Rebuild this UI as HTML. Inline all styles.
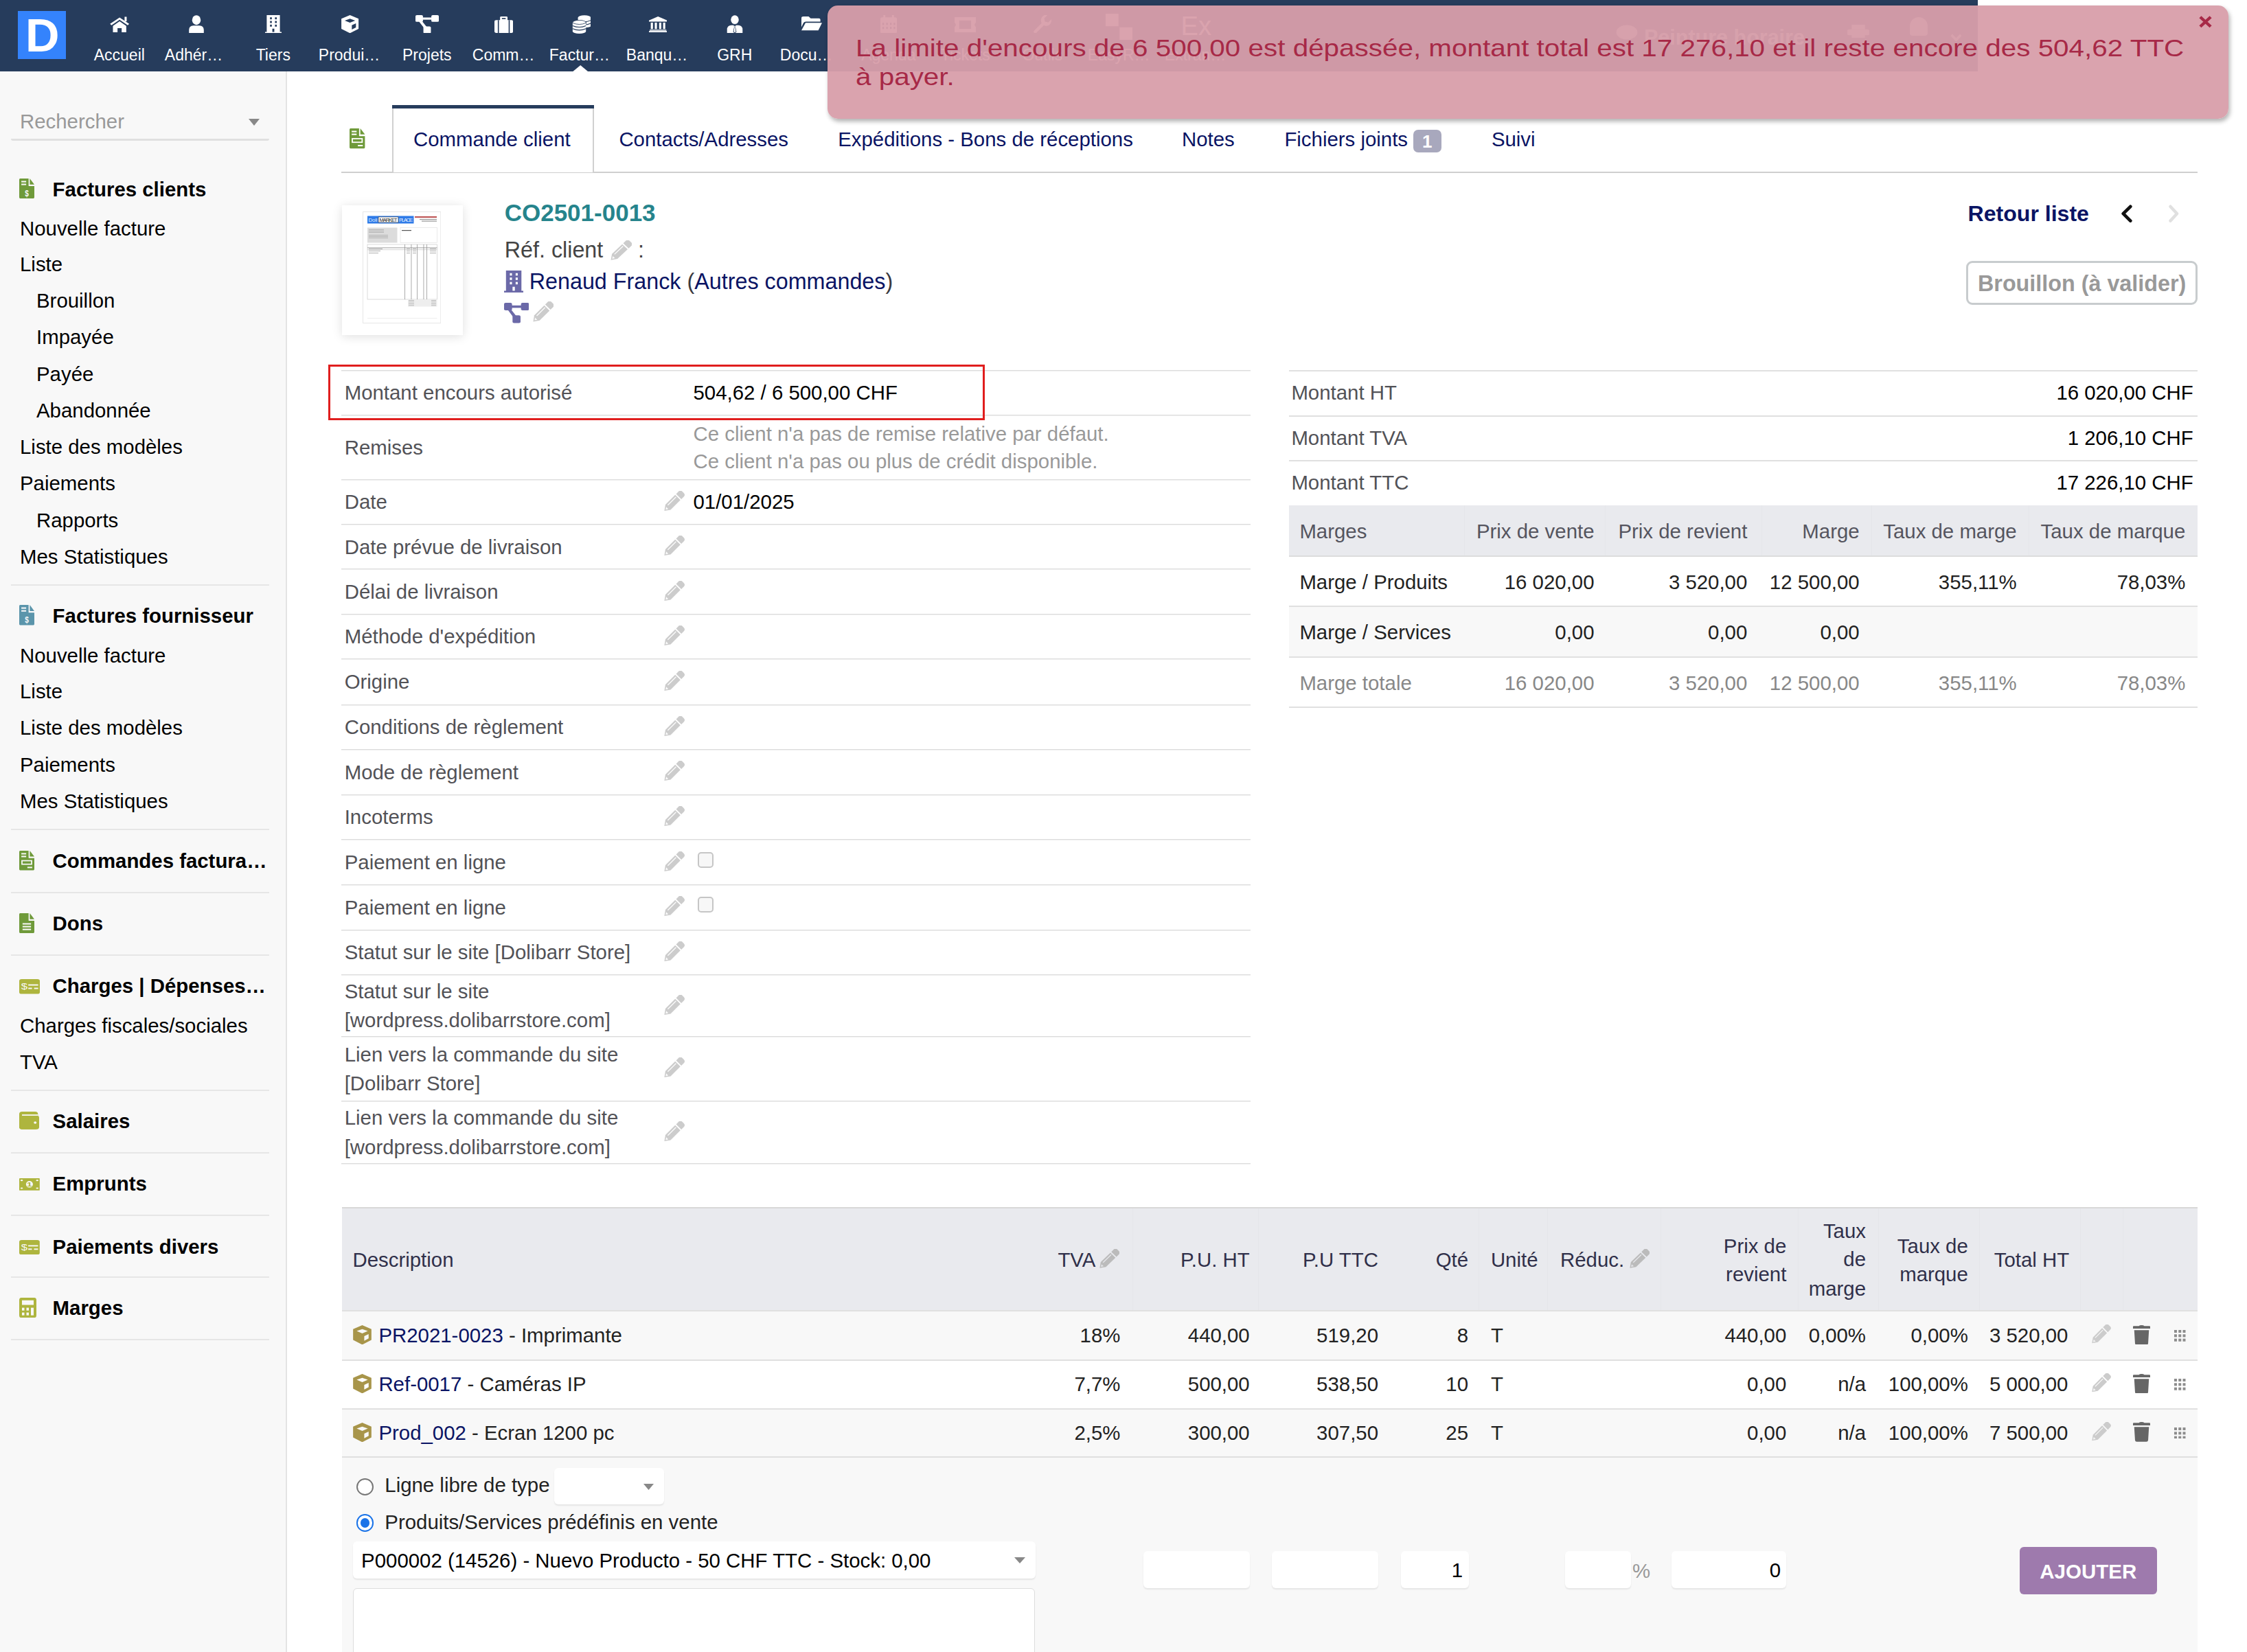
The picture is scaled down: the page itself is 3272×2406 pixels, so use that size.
<!DOCTYPE html><html><head><meta charset="utf-8"><style>html,body{margin:0;padding:0;}body{width:3272px;height:2406px;overflow:hidden;position:relative;background:#fff;font-family:"Liberation Sans",sans-serif;}.t{position:absolute;line-height:0;white-space:nowrap;}svg{display:block}</style></head><body>
<div style="position:absolute;left:0.00px;top:104.00px;width:416.00px;height:2302.00px;background:#f8f8f8;"></div>
<div style="position:absolute;left:416.00px;top:104.00px;width:1.50px;height:2302.00px;background:#e4e4e4;"></div>
<div class="t" style="left:29.00px;top:176.51px;font-size:29.4px;color:#999;font-weight:normal;">Rechercher</div>
<svg style="position:absolute;left:361.70px;top:172.70px;" width="16.00" height="10.00" viewBox="0 0 10 10" preserveAspectRatio="none"><path fill="#888" d="M0 0 L10 0 L5 10 Z"/></svg>
<div style="position:absolute;left:16.40px;top:202.00px;width:375.20px;height:2.50px;background:#e0e0e0;border-radius:0 0 4px 4px;"></div>
<svg style="position:absolute;left:28.00px;top:259.50px;" width="22.00" height="29.00" viewBox="0 0 100 100" preserveAspectRatio="none"><path fill="#6f9a3a" d="M0 6 Q0 0 6 0 L62 0 L62 38 L100 38 L100 94 Q100 100 94 100 L6 100 Q0 100 0 94 Z"/><path fill="#6f9a3a" d="M70 0 L100 30 L70 30 Z"/><rect fill="#f8f8f8" x="14" y="12" width="32" height="7"/><rect fill="#f8f8f8" x="14" y="26" width="32" height="7"/><text x="50" y="88" font-family="Liberation Sans" font-weight="bold" font-size="46" fill="#f8f8f8" text-anchor="middle">$</text></svg>
<div class="t" style="left:76.60px;top:275.81px;font-size:29.4px;color:#000;font-weight:bold;">Factures clients</div>
<div class="t" style="left:29.00px;top:332.61px;font-size:29.4px;color:#000;font-weight:normal;">Nouvelle facture</div>
<div class="t" style="left:29.00px;top:385.41px;font-size:29.4px;color:#000;font-weight:normal;">Liste</div>
<div class="t" style="left:53.00px;top:438.31px;font-size:29.4px;color:#000;font-weight:normal;">Brouillon</div>
<div class="t" style="left:53.00px;top:491.31px;font-size:29.4px;color:#000;font-weight:normal;">Impayée</div>
<div class="t" style="left:53.00px;top:544.91px;font-size:29.4px;color:#000;font-weight:normal;">Payée</div>
<div class="t" style="left:53.00px;top:597.81px;font-size:29.4px;color:#000;font-weight:normal;">Abandonnée</div>
<div class="t" style="left:29.00px;top:650.81px;font-size:29.4px;color:#000;font-weight:normal;">Liste des modèles</div>
<div class="t" style="left:29.00px;top:703.81px;font-size:29.4px;color:#000;font-weight:normal;">Paiements</div>
<div class="t" style="left:53.00px;top:757.61px;font-size:29.4px;color:#000;font-weight:normal;">Rapports</div>
<div class="t" style="left:29.00px;top:810.61px;font-size:29.4px;color:#000;font-weight:normal;">Mes Statistiques</div>
<div style="position:absolute;left:16.00px;top:850.60px;width:376.00px;height:2.00px;background:#e6e6e6;"></div>
<svg style="position:absolute;left:28.00px;top:881.40px;" width="22.00" height="29.60" viewBox="0 0 100 100" preserveAspectRatio="none"><path fill="#5b95ab" d="M0 6 Q0 0 6 0 L62 0 L62 38 L100 38 L100 94 Q100 100 94 100 L6 100 Q0 100 0 94 Z"/><path fill="#5b95ab" d="M70 0 L100 30 L70 30 Z"/><rect fill="#f8f8f8" x="14" y="12" width="32" height="7"/><rect fill="#f8f8f8" x="14" y="26" width="32" height="7"/><text x="50" y="88" font-family="Liberation Sans" font-weight="bold" font-size="46" fill="#f8f8f8" text-anchor="middle">$</text></svg>
<div class="t" style="left:76.60px;top:896.91px;font-size:29.4px;color:#000;font-weight:bold;">Factures fournisseur</div>
<div class="t" style="left:29.00px;top:954.61px;font-size:29.4px;color:#000;font-weight:normal;">Nouvelle facture</div>
<div class="t" style="left:29.00px;top:1007.31px;font-size:29.4px;color:#000;font-weight:normal;">Liste</div>
<div class="t" style="left:29.00px;top:1059.51px;font-size:29.4px;color:#000;font-weight:normal;">Liste des modèles</div>
<div class="t" style="left:29.00px;top:1113.51px;font-size:29.4px;color:#000;font-weight:normal;">Paiements</div>
<div class="t" style="left:29.00px;top:1167.11px;font-size:29.4px;color:#000;font-weight:normal;">Mes Statistiques</div>
<div style="position:absolute;left:16.00px;top:1207.40px;width:376.00px;height:2.00px;background:#e6e6e6;"></div>
<svg style="position:absolute;left:28.00px;top:1239.00px;" width="22.00" height="28.50" viewBox="0 0 100 100" preserveAspectRatio="none"><path fill="#6f9a3a" d="M0 6 Q0 0 6 0 L62 0 L62 38 L100 38 L100 94 Q100 100 94 100 L6 100 Q0 100 0 94 Z"/><path fill="#6f9a3a" d="M70 0 L100 30 L70 30 Z"/><rect fill="#f8f8f8" x="14" y="12" width="32" height="7"/><rect fill="#f8f8f8" x="14" y="26" width="32" height="7"/><rect fill="#f8f8f8" x="14" y="48" width="72" height="24"/><rect fill="#6f9a3a" x="22" y="54" width="56" height="12"/><rect fill="#f8f8f8" x="54" y="82" width="32" height="7"/></svg>
<div class="t" style="left:76.60px;top:1254.21px;font-size:29.4px;color:#000;font-weight:bold;">Commandes factura…</div>
<div style="position:absolute;left:16.00px;top:1298.60px;width:376.00px;height:2.00px;background:#e6e6e6;"></div>
<svg style="position:absolute;left:28.00px;top:1330.00px;" width="22.00" height="29.00" viewBox="0 0 100 100" preserveAspectRatio="none"><path fill="#6f9a3a" d="M0 6 Q0 0 6 0 L62 0 L62 38 L100 38 L100 94 Q100 100 94 100 L6 100 Q0 100 0 94 Z"/><path fill="#6f9a3a" d="M70 0 L100 30 L70 30 Z"/><rect fill="#f8f8f8" x="22" y="50" width="56" height="7"/><rect fill="#f8f8f8" x="22" y="64" width="56" height="7"/><rect fill="#f8f8f8" x="22" y="78" width="56" height="7"/></svg>
<div class="t" style="left:76.60px;top:1345.41px;font-size:29.4px;color:#000;font-weight:bold;">Dons</div>
<div style="position:absolute;left:16.00px;top:1390.20px;width:376.00px;height:2.00px;background:#e6e6e6;"></div>
<svg style="position:absolute;left:28.00px;top:1426.00px;" width="30.00" height="21.60" viewBox="0 0 100 100" preserveAspectRatio="none"><rect fill="#aeb53e" x="0" y="0" width="100" height="100" rx="12"/><text x="25" y="70" font-family="Liberation Sans" font-size="56" fill="#f8f8f8" text-anchor="middle">$</text><rect fill="#f8f8f8" x="44" y="35" width="48" height="9"/><rect fill="#f8f8f8" x="44" y="58" width="18" height="9"/><rect fill="#f8f8f8" x="72" y="58" width="20" height="9"/></svg>
<div class="t" style="left:76.60px;top:1436.01px;font-size:29.4px;color:#000;font-weight:bold;">Charges | Dépenses…</div>
<div class="t" style="left:29.00px;top:1494.11px;font-size:29.4px;color:#000;font-weight:normal;">Charges fiscales/sociales</div>
<div class="t" style="left:29.00px;top:1547.01px;font-size:29.4px;color:#000;font-weight:normal;">TVA</div>
<div style="position:absolute;left:16.00px;top:1587.00px;width:376.00px;height:2.00px;background:#e6e6e6;"></div>
<svg style="position:absolute;left:28.00px;top:1619.00px;" width="29.00" height="25.70" viewBox="0 0 100 100" preserveAspectRatio="none"><rect fill="#aeb53e" x="0" y="0" width="94" height="100" rx="14"/><rect fill="#aeb53e" x="0" y="22" width="100" height="78" rx="12"/><rect fill="#f8f8f8" x="14" y="16" width="80" height="7"/><circle fill="#f8f8f8" cx="80" cy="62" r="7"/></svg>
<div class="t" style="left:76.60px;top:1632.91px;font-size:29.4px;color:#000;font-weight:bold;">Salaires</div>
<div style="position:absolute;left:16.00px;top:1678.30px;width:376.00px;height:2.00px;background:#e6e6e6;"></div>
<svg style="position:absolute;left:28.00px;top:1716.00px;" width="29.80" height="17.70" viewBox="0 0 100 100" preserveAspectRatio="none"><rect fill="#aeb53e" x="0" y="0" width="100" height="100" rx="3"/><ellipse fill="#f8f8f8" cx="50" cy="50" rx="17" ry="27"/><text x="50" y="66" font-family="Liberation Sans" font-weight="bold" font-size="46" fill="#aeb53e" text-anchor="middle">1</text><circle fill="#f8f8f8" cx="12" cy="18" r="6"/><circle fill="#f8f8f8" cx="88" cy="18" r="6"/><circle fill="#f8f8f8" cx="12" cy="82" r="6"/><circle fill="#f8f8f8" cx="88" cy="82" r="6"/></svg>
<div class="t" style="left:76.60px;top:1724.11px;font-size:29.4px;color:#000;font-weight:bold;">Emprunts</div>
<div style="position:absolute;left:16.00px;top:1769.00px;width:376.00px;height:2.00px;background:#e6e6e6;"></div>
<svg style="position:absolute;left:28.00px;top:1806.00px;" width="29.80" height="21.30" viewBox="0 0 100 100" preserveAspectRatio="none"><rect fill="#aeb53e" x="0" y="0" width="100" height="100" rx="12"/><text x="25" y="70" font-family="Liberation Sans" font-size="56" fill="#f8f8f8" text-anchor="middle">$</text><rect fill="#f8f8f8" x="44" y="35" width="48" height="9"/><rect fill="#f8f8f8" x="44" y="58" width="18" height="9"/><rect fill="#f8f8f8" x="72" y="58" width="20" height="9"/></svg>
<div class="t" style="left:76.60px;top:1816.11px;font-size:29.4px;color:#000;font-weight:bold;">Paiements divers</div>
<div style="position:absolute;left:16.00px;top:1858.60px;width:376.00px;height:2.00px;background:#e6e6e6;"></div>
<svg style="position:absolute;left:28.00px;top:1889.60px;" width="25.00" height="29.20" viewBox="0 0 100 100" preserveAspectRatio="none"><rect fill="#aeb53e" x="0" y="0" width="100" height="100" rx="12"/><rect fill="#f8f8f8" x="16" y="13" width="68" height="23"/><rect fill="#f8f8f8" x="16" y="50" width="14" height="14"/><rect fill="#f8f8f8" x="42" y="50" width="14" height="14"/><rect fill="#f8f8f8" x="16" y="74" width="14" height="14"/><rect fill="#f8f8f8" x="42" y="74" width="14" height="14"/><rect fill="#f8f8f8" x="68" y="50" width="16" height="38"/></svg>
<div class="t" style="left:76.60px;top:1904.51px;font-size:29.4px;color:#000;font-weight:bold;">Marges</div>
<div style="position:absolute;left:16.00px;top:1949.80px;width:376.00px;height:2.00px;background:#e6e6e6;"></div>
<div style="position:absolute;left:0.00px;top:0.00px;width:2880.00px;height:104.00px;background:rgb(38,60,92);"></div>
<div style="position:absolute;left:26.00px;top:16.00px;width:70.00px;height:70.00px;background:#3483fc;"></div>
<div class="t" style="left:-438.20px;width:1000px;text-align:center;top:52.25px;font-size:68.5px;color:#fff;font-weight:bold;">D</div>
<svg style="position:absolute;left:833.60px;top:94.70px;" width="22.50" height="9.30" viewBox="0 0 10 10" preserveAspectRatio="none"><path fill="#fff" d="M0 10 L5 0 L10 10 Z"/></svg>
<div class="t" style="left:127.80px;width:92px;text-align:center;top:79.83px;font-size:23px;color:#fff;">Accueil</div>
<svg style="position:absolute;left:158.60px;top:23.50px;" width="30.30" height="23.50" viewBox="0 0 100 100" preserveAspectRatio="none"><path fill="#fff" d="M50 6 L96 46 L89 54 L50 20 L11 54 L4 46 Z"/><rect fill="#fff" x="74" y="2" width="10" height="28"/><path fill="#fff" d="M50 30 L82 58 L82 100 L60 100 L60 72 L40 72 L40 100 L18 100 L18 58 Z"/></svg>
<div class="t" style="left:239.80px;width:92px;text-align:left;top:79.83px;font-size:23px;color:#fff;">Adhér…</div>
<svg style="position:absolute;left:273.80px;top:21.80px;" width="24.00" height="26.70" viewBox="0 0 100 100" preserveAspectRatio="none"><circle fill="#fff" cx="50" cy="27" r="26"/><path fill="#fff" d="M5 100 L5 82 Q5 57 32 57 L68 57 Q95 57 95 82 L95 100 Z"/></svg>
<div class="t" style="left:351.80px;width:92px;text-align:center;top:79.83px;font-size:23px;color:#fff;">Tiers</div>
<svg style="position:absolute;left:385.80px;top:21.70px;" width="24.00" height="26.70" viewBox="0 0 100 100" preserveAspectRatio="none"><path fill="#fff" d="M10 0 H90 V92 H100 V100 H0 V92 H10 Z"/><rect fill="rgb(38,60,92)" x="30" y="12" width="11" height="11"/><rect fill="rgb(38,60,92)" x="60" y="12" width="11" height="11"/><rect fill="rgb(38,60,92)" x="30" y="32" width="11" height="11"/><rect fill="rgb(38,60,92)" x="60" y="32" width="11" height="11"/><rect fill="rgb(38,60,92)" x="30" y="52" width="11" height="11"/><rect fill="rgb(38,60,92)" x="60" y="52" width="11" height="11"/><rect fill="rgb(38,60,92)" x="44" y="74" width="12" height="18"/></svg>
<div class="t" style="left:463.80px;width:92px;text-align:left;top:79.83px;font-size:23px;color:#fff;">Produi…</div>
<svg style="position:absolute;left:496.20px;top:21.70px;" width="27.20" height="26.30" viewBox="0 0 100 100" preserveAspectRatio="none"><path fill="#fff" d="M50 0 L96 20 L96 76 L50 100 L4 76 L4 20 Z"/><path fill="rgb(38,60,92)" d="M50 20 L78 30 L50 42 L22 30 Z"/><path fill="rgb(38,60,92)" d="M60 56 L82 46 L82 68 L60 80 Z"/></svg>
<div class="t" style="left:575.80px;width:92px;text-align:center;top:79.83px;font-size:23px;color:#fff;">Projets</div>
<svg style="position:absolute;left:604.80px;top:21.70px;" width="34.00" height="26.70" viewBox="0 0 100 100" preserveAspectRatio="none"><rect fill="#fff" x="0" y="0" width="32" height="37" rx="6"/><rect fill="#fff" x="68" y="0" width="32" height="37" rx="6"/><rect fill="#fff" x="34" y="62" width="32" height="38" rx="6"/><rect fill="#fff" x="25" y="13" width="50" height="12"/><path fill="#fff" d="M12 30 L26 30 L52 70 L40 76 Z"/></svg>
<div class="t" style="left:687.80px;width:92px;text-align:left;top:79.83px;font-size:23px;color:#fff;">Comm…</div>
<svg style="position:absolute;left:720.20px;top:23.50px;" width="27.20" height="24.00" viewBox="0 0 100 100" preserveAspectRatio="none"><rect fill="#fff" x="0" y="22" width="100" height="78" rx="10"/><rect fill="#fff" x="30" y="0" width="40" height="30" rx="6"/><rect fill="rgb(38,60,92)" x="40" y="9" width="20" height="7"/><rect fill="rgb(38,60,92)" x="18" y="22" width="6" height="78"/><rect fill="rgb(38,60,92)" x="76" y="22" width="6" height="78"/></svg>
<div class="t" style="left:799.80px;width:92px;text-align:left;top:79.83px;font-size:23px;color:#fff;">Factur…</div>
<svg style="position:absolute;left:832.80px;top:21.70px;" width="27.70" height="27.00" viewBox="0 0 100 100" preserveAspectRatio="none"><ellipse fill="#fff" cx="65" cy="14" rx="34" ry="13"/><rect fill="#fff" x="31" y="14" width="68" height="44"/><ellipse fill="#fff" cx="65" cy="58" rx="34" ry="10"/><path stroke="rgb(38,60,92)" stroke-width="4" fill="none" d="M31 28 Q65 44 99 28 M31 44 Q65 60 99 44"/><ellipse fill="rgb(38,60,92)" cx="38" cy="42" rx="38" ry="16"/><ellipse fill="#fff" cx="38" cy="42" rx="35" ry="13"/><rect fill="#fff" x="3" y="42" width="70" height="46"/><ellipse fill="#fff" cx="38" cy="88" rx="35" ry="12"/><path stroke="rgb(38,60,92)" stroke-width="4" fill="none" d="M3 57 Q38 73 73 57 M3 73 Q38 89 73 73"/><path stroke="rgb(38,60,92)" stroke-width="3" fill="none" d="M3 42 Q38 58 73 42"/></svg>
<div class="t" style="left:911.80px;width:92px;text-align:left;top:79.83px;font-size:23px;color:#fff;">Banqu…</div>
<svg style="position:absolute;left:944.80px;top:23.70px;" width="26.40" height="23.50" viewBox="0 0 100 100" preserveAspectRatio="none"><path fill="#fff" d="M50 0 L100 24 L100 32 L0 32 L0 24 Z"/><rect fill="#fff" x="10" y="38" width="12" height="40"/><rect fill="#fff" x="32" y="38" width="12" height="40"/><rect fill="#fff" x="56" y="38" width="12" height="40"/><rect fill="#fff" x="78" y="38" width="12" height="40"/><rect fill="#fff" x="4" y="82" width="92" height="6"/><rect fill="#fff" x="0" y="90" width="100" height="10"/></svg>
<div class="t" style="left:1023.80px;width:92px;text-align:center;top:79.83px;font-size:23px;color:#fff;">GRH</div>
<svg style="position:absolute;left:1057.80px;top:21.70px;" width="24.00" height="26.70" viewBox="0 0 100 100" preserveAspectRatio="none"><circle fill="#fff" cx="50" cy="25" r="24"/><path fill="#fff" d="M3 100 L3 80 Q3 55 30 55 L70 55 Q97 55 97 80 L97 100 Z"/><path fill="rgb(38,60,92)" d="M43 56 L57 56 L54 64 L60 92 L50 100 L40 92 L46 64 Z"/><path fill="#fff" d="M46 60 L54 60 L52 66 L56 90 L50 96 L44 90 L48 66 Z"/></svg>
<div class="t" style="left:1135.80px;width:92px;text-align:left;top:79.83px;font-size:23px;color:#fff;">Docu…</div>
<svg style="position:absolute;left:1166.80px;top:24.00px;" width="30.00" height="22.00" viewBox="0 0 100 100" preserveAspectRatio="none"><path fill="#fff" d="M0 10 Q0 0 10 0 L35 0 L45 12 L85 12 Q92 12 92 20 L92 34 L22 34 Q14 34 10 42 L0 70 Z"/><path fill="#fff" d="M20 42 L100 42 L82 92 L0 92 Z"/></svg>
<div class="t" style="left:1247.80px;width:92px;text-align:center;top:79.83px;font-size:23px;color:#fff;">Agenda</div>
<svg style="position:absolute;left:1281.80px;top:21.70px;" width="24.00" height="26.70" viewBox="0 0 100 100" preserveAspectRatio="none"><rect fill="#fff" x="0" y="12" width="100" height="88" rx="10"/><rect fill="#fff" x="18" y="0" width="12" height="22"/><rect fill="#fff" x="70" y="0" width="12" height="22"/><rect fill="rgb(38,60,92)" x="12" y="42" width="10" height="12"/><rect fill="rgb(38,60,92)" x="35" y="42" width="10" height="12"/><rect fill="rgb(38,60,92)" x="58" y="42" width="10" height="12"/><rect fill="rgb(38,60,92)" x="80" y="42" width="10" height="12"/><rect fill="rgb(38,60,92)" x="12" y="64" width="10" height="12"/><rect fill="rgb(38,60,92)" x="35" y="64" width="10" height="12"/><rect fill="rgb(38,60,92)" x="58" y="64" width="10" height="12"/><rect fill="rgb(38,60,92)" x="80" y="64" width="10" height="12"/></svg>
<div class="t" style="left:1359.80px;width:92px;text-align:center;top:79.83px;font-size:23px;color:#fff;">Tickets</div>
<svg style="position:absolute;left:1390.30px;top:25.00px;" width="31.00" height="22.00" viewBox="0 0 100 100" preserveAspectRatio="none"><path fill="#fff" d="M0 0 H100 V35 Q88 50 100 65 V100 H0 V65 Q12 50 0 35 Z"/><rect fill="rgb(38,60,92)" x="22" y="22" width="56" height="56"/></svg>
<div class="t" style="left:1471.80px;width:92px;text-align:center;top:79.83px;font-size:23px;color:#fff;">Outils</div>
<svg style="position:absolute;left:1504.80px;top:21.70px;" width="26.70" height="26.70" viewBox="0 0 100 100" preserveAspectRatio="none"><path fill="#fff" d="M98 22 L80 40 L62 36 L58 18 L76 0 Q50 -4 42 20 Q38 32 44 44 L4 84 Q-4 94 6 98 Q12 102 18 94 L56 56 Q70 62 82 56 Q100 46 98 22 Z"/></svg>
<div class="t" style="left:1583.80px;width:92px;text-align:left;top:79.83px;font-size:23px;color:#fff;">EasyR…</div>
<svg style="position:absolute;left:1610.20px;top:20.00px;" width="39.00" height="38.00" viewBox="0 0 100 100" preserveAspectRatio="none"><rect fill="#fff" x="0" y="0" width="48" height="48"/><rect fill="#fff" x="52" y="52" width="48" height="48"/></svg>
<div class="t" style="left:1695.80px;width:92px;text-align:left;top:79.83px;font-size:23px;color:#fff;">Extran…</div>
<div class="t" style="left:1241.80px;width:1000px;text-align:center;top:37.83px;font-size:38px;color:#fff;font-weight:normal;">Ex</div>
<div style="position:absolute;left:0;top:0;opacity:0.75">
<svg style="position:absolute;left:2353.00px;top:36.00px;" width="32.00" height="22.00" viewBox="0 0 100 100" preserveAspectRatio="none"><circle fill="#fff" cx="50" cy="50" r="48"/></svg>
<div class="t" style="left:2394.00px;top:54.43px;font-size:30.5px;color:#fff;font-weight:bold;">Peinture horaire</div>
<svg style="position:absolute;left:2690.00px;top:36.00px;" width="32.00" height="19.00" viewBox="0 0 100 100" preserveAspectRatio="none"><rect fill="#fff" x="20" y="0" width="60" height="35"/><rect fill="#fff" x="0" y="35" width="100" height="45" rx="8"/><rect fill="#fff" x="20" y="65" width="60" height="35"/></svg>
<div style="position:absolute;left:2781.00px;top:25.00px;width:26.00px;height:27.00px;background:#fff;border-radius:13px 13px 4px 4px;"></div>
<svg style="position:absolute;left:2840.00px;top:49.00px;" width="17.00" height="11.00" viewBox="0 0 20 12" preserveAspectRatio="none"><path fill="none" stroke="#fff" stroke-width="4" d="M2 2 L10 10 L18 2"/></svg>
</div>
<div style="position:absolute;left:497.00px;top:249.50px;width:2703.00px;height:2.00px;background:#cfcfcf;"></div>
<div style="position:absolute;left:571.40px;top:153.30px;width:293.80px;height:98.20px;background:#fff;border-left:2px solid #d0d0d0;border-right:2px solid #d0d0d0;box-sizing:border-box;"></div>
<div style="position:absolute;left:571.40px;top:153.30px;width:293.80px;height:5.20px;background:rgb(38,60,92);"></div>
<svg style="position:absolute;left:509.20px;top:187.40px;" width="22.40" height="29.30" viewBox="0 0 100 100" preserveAspectRatio="none"><path fill="#6f9a3a" d="M0 6 Q0 0 6 0 L62 0 L62 38 L100 38 L100 94 Q100 100 94 100 L6 100 Q0 100 0 94 Z"/><path fill="#6f9a3a" d="M70 0 L100 30 L70 30 Z"/><rect fill="#fff" x="14" y="12" width="32" height="7"/><rect fill="#fff" x="14" y="26" width="32" height="7"/><rect fill="#fff" x="14" y="48" width="72" height="24"/><rect fill="#6f9a3a" x="22" y="54" width="56" height="12"/><rect fill="#fff" x="54" y="82" width="32" height="7"/></svg>
<div class="t" style="left:602.00px;top:203.01px;font-size:29.4px;color:rgb(10,20,100);font-weight:normal;">Commande client</div>
<div class="t" style="left:901.40px;top:203.01px;font-size:29.4px;color:rgb(10,20,100);font-weight:normal;">Contacts/Adresses</div>
<div class="t" style="left:1220.20px;top:203.01px;font-size:29.4px;color:rgb(10,20,100);font-weight:normal;">Expéditions - Bons de réceptions</div>
<div class="t" style="left:1721.00px;top:203.01px;font-size:29.4px;color:rgb(10,20,100);font-weight:normal;">Notes</div>
<div class="t" style="left:1870.40px;top:203.01px;font-size:29.4px;color:rgb(10,20,100);font-weight:normal;">Fichiers joints</div>
<div style="position:absolute;left:2057.70px;top:189.00px;width:41.20px;height:33.00px;background:#a8a8bd;border-radius:7px;"></div>
<div class="t" style="left:1578.30px;width:1000px;text-align:center;top:206.49px;font-size:26px;color:#fff;font-weight:bold;">1</div>
<div class="t" style="left:2171.90px;top:203.01px;font-size:29.4px;color:rgb(10,20,100);font-weight:normal;">Suivi</div>
<div style="position:absolute;left:498.00px;top:299.00px;width:176.00px;height:189.00px;background:#fff;box-shadow:0 2px 14px rgba(0,0,0,0.13);"></div>
<svg style="position:absolute;left:528.00px;top:307.60px;" width="114.30" height="163.00" viewBox="0 0 114.3 163" preserveAspectRatio="none"><rect x="0.5" y="0.5" width="113.3" height="162" fill="#fff" stroke="#e6e6e6" stroke-width="1"/><rect x="7" y="6.5" width="67.5" height="11" fill="#2f7be8"/><rect x="23" y="8" width="29" height="8" fill="#fff" stroke="#333" stroke-width="0.6"/><text x="15" y="15.3" font-family="Liberation Sans" font-size="8" fill="#d8e6ff" text-anchor="middle" textLength="13">Doli</text><text x="37.5" y="15" font-family="Liberation Sans" font-size="7.5" fill="#222" text-anchor="middle" textLength="26">MARKET</text><text x="63" y="15.3" font-family="Liberation Sans" font-size="8" fill="#e6f0ff" text-anchor="middle" textLength="20">PLACE</text><rect x="76" y="7" width="32" height="2.2" fill="#b03030" opacity="0.8"/><rect x="83" y="11" width="25" height="1.2" fill="#999"/><rect x="86" y="13.5" width="22" height="1.2" fill="#999"/><rect x="7" y="23.5" width="43.5" height="22" fill="#dcdcdc"/><rect x="9" y="26" width="22" height="0.8" fill="#aaa"/><rect x="9" y="28" width="22" height="0.8" fill="#aaa"/><rect x="9" y="30" width="22" height="0.8" fill="#aaa"/><rect x="9" y="34" width="28" height="0.8" fill="#aaa"/><rect x="9" y="36" width="28" height="0.8" fill="#aaa"/><rect x="9" y="38" width="28" height="0.8" fill="#aaa"/><rect x="55" y="23.5" width="53.5" height="22" fill="none" stroke="#ddd" stroke-width="0.6"/><rect x="57" y="27" width="14" height="1.2" fill="#555"/><rect x="7" y="48" width="101.5" height="80" fill="none" stroke="#ccc" stroke-width="0.7"/><rect x="7" y="52.5" width="101.5" height="0.8" fill="#888"/><rect x="7" y="55.5" width="101.5" height="0.6" fill="#bbb"/><rect x="61.3" y="48" width="0.7" height="80" fill="#888"/><rect x="70.6" y="48" width="0.7" height="80" fill="#888"/><rect x="79.3" y="48" width="0.7" height="80" fill="#888"/><rect x="88.6" y="48" width="0.7" height="80" fill="#888"/><rect x="93.2" y="48" width="0.7" height="80" fill="#888"/><rect x="9" y="54" width="20" height="0.8" fill="#999"/><rect x="64" y="54" width="5" height="0.8" fill="#999"/><rect x="73" y="54" width="5" height="0.8" fill="#999"/><rect x="98" y="54" width="9" height="0.8" fill="#999"/><rect x="9" y="57" width="17" height="0.8" fill="#999"/><rect x="64" y="57" width="5" height="0.8" fill="#999"/><rect x="73" y="57" width="5" height="0.8" fill="#999"/><rect x="98" y="57" width="9" height="0.8" fill="#999"/><rect x="9" y="60" width="14" height="0.8" fill="#999"/><rect x="64" y="60" width="5" height="0.8" fill="#999"/><rect x="73" y="60" width="5" height="0.8" fill="#999"/><rect x="98" y="60" width="9" height="0.8" fill="#999"/><rect x="66" y="128" width="42.5" height="10.5" fill="#eee"/><rect x="67" y="129" width="8" height="0.8" fill="#aaa"/><rect x="100" y="129" width="7" height="0.8" fill="#aaa"/><rect x="67" y="131.5" width="8" height="0.8" fill="#aaa"/><rect x="100" y="131.5" width="7" height="0.8" fill="#aaa"/><rect x="67" y="134" width="8" height="0.8" fill="#aaa"/><rect x="100" y="134" width="7" height="0.8" fill="#aaa"/><rect x="67" y="136.5" width="8" height="0.8" fill="#aaa"/><rect x="100" y="136.5" width="7" height="0.8" fill="#aaa"/><rect x="7" y="155" width="101.5" height="0.5" fill="#ddd"/></svg>
<div class="t" style="left:734.70px;top:310.37px;font-size:35px;color:rgb(38,132,140);font-weight:bold;">CO2501-0013</div>
<div class="t" style="left:734.70px;top:364.30px;font-size:32.3px;color:#444;font-weight:normal;">Réf. client</div>
<svg style="position:absolute;left:887.00px;top:350.00px;" width="33.00" height="31.00" viewBox="0 0 100 100" preserveAspectRatio="none"><g transform="rotate(-45 50 50)"><path fill="#cccccc" d="M-10 50 L14 33 L78 33 L78 67 L14 67 Z"/><path fill="#cccccc" d="M84 33 L100 33 Q112 33 112 45 L112 55 Q112 67 100 67 L84 67 Z"/><path fill="#fff" d="M-2 50 L9 43 L9 57 Z" opacity="0.9"/><rect fill="#fff" x="20" y="40" width="54" height="4.5" opacity="0.9"/></g></svg>
<div class="t" style="left:929.00px;top:364.30px;font-size:32.3px;color:#444;font-weight:normal;">:</div>
<svg style="position:absolute;left:733.70px;top:394.00px;" width="28.10" height="32.00" viewBox="0 0 100 100" preserveAspectRatio="none"><path fill="#6b69a8" d="M10 0 H90 V92 H100 V100 H0 V92 H10 Z"/><rect fill="#fff" x="30" y="12" width="11" height="11"/><rect fill="#fff" x="60" y="12" width="11" height="11"/><rect fill="#fff" x="30" y="32" width="11" height="11"/><rect fill="#fff" x="60" y="32" width="11" height="11"/><rect fill="#fff" x="30" y="52" width="11" height="11"/><rect fill="#fff" x="60" y="52" width="11" height="11"/><rect fill="#fff" x="44" y="74" width="12" height="18"/></svg>
<div class="t" style="left:770.70px;top:410.30px;font-size:32.3px;color:rgb(10,20,100);font-weight:normal;">Renaud Franck <span style="color:#3a3a40">(</span>Autres commandes<span style="color:#3a3a40">)</span></div>
<svg style="position:absolute;left:733.50px;top:441.00px;" width="36.30" height="29.50" viewBox="0 0 100 100" preserveAspectRatio="none"><rect fill="#6b69a8" x="0" y="0" width="32" height="37" rx="6"/><rect fill="#6b69a8" x="68" y="0" width="32" height="37" rx="6"/><rect fill="#6b69a8" x="34" y="62" width="32" height="38" rx="6"/><rect fill="#6b69a8" x="25" y="13" width="50" height="12"/><path fill="#6b69a8" d="M12 30 L26 30 L52 70 L40 76 Z"/></svg>
<svg style="position:absolute;left:773.70px;top:439.00px;" width="32.10" height="31.80" viewBox="0 0 100 100" preserveAspectRatio="none"><g transform="rotate(-45 50 50)"><path fill="#cccccc" d="M-10 50 L14 33 L78 33 L78 67 L14 67 Z"/><path fill="#cccccc" d="M84 33 L100 33 Q112 33 112 45 L112 55 Q112 67 100 67 L84 67 Z"/><path fill="#fff" d="M-2 50 L9 43 L9 57 Z" opacity="0.9"/><rect fill="#fff" x="20" y="40" width="54" height="4.5" opacity="0.9"/></g></svg>
<div class="t" style="left:2865.50px;top:311.27px;font-size:32.1px;color:rgb(10,20,100);font-weight:bold;">Retour liste</div>
<svg style="position:absolute;left:3087.40px;top:298.00px;" width="19.10" height="26.40" viewBox="0 0 20 28" preserveAspectRatio="none"><path fill="none" stroke="#111" stroke-width="5" stroke-linecap="round" stroke-linejoin="round" d="M16 3 L5 14 L16 25"/></svg>
<svg style="position:absolute;left:3156.60px;top:298.00px;" width="17.40" height="26.40" viewBox="0 0 20 28" preserveAspectRatio="none"><path fill="none" stroke="#e0e0e0" stroke-width="5" stroke-linecap="round" stroke-linejoin="round" d="M4 3 L15 14 L4 25"/></svg>
<div style="position:absolute;left:2863.00px;top:380.20px;width:336.50px;height:63.50px;border:3px solid #c8ccce;border-radius:9px;box-sizing:border-box;"></div>
<div class="t" style="left:2880.00px;top:413.40px;font-size:32.3px;color:#999;font-weight:bold;">Brouillon (à valider)</div>
<div style="position:absolute;left:497.00px;top:539.00px;width:1324.00px;height:1.00px;background:#dcdcdc;"></div>
<div style="position:absolute;left:497.00px;top:540.00px;width:1324.00px;height:1.00px;background:#f0f0f0;"></div>
<div style="position:absolute;left:497.00px;top:604.00px;width:1324.00px;height:1.00px;background:#dcdcdc;"></div>
<div style="position:absolute;left:497.00px;top:605.00px;width:1324.00px;height:1.00px;background:#f0f0f0;"></div>
<div style="position:absolute;left:497.00px;top:698.00px;width:1324.00px;height:1.00px;background:#dcdcdc;"></div>
<div style="position:absolute;left:497.00px;top:699.00px;width:1324.00px;height:1.00px;background:#f0f0f0;"></div>
<div style="position:absolute;left:497.00px;top:763.00px;width:1324.00px;height:1.00px;background:#dcdcdc;"></div>
<div style="position:absolute;left:497.00px;top:764.00px;width:1324.00px;height:1.00px;background:#f0f0f0;"></div>
<div style="position:absolute;left:497.00px;top:828.00px;width:1324.00px;height:1.00px;background:#dcdcdc;"></div>
<div style="position:absolute;left:497.00px;top:829.00px;width:1324.00px;height:1.00px;background:#f0f0f0;"></div>
<div style="position:absolute;left:497.00px;top:894.00px;width:1324.00px;height:1.00px;background:#dcdcdc;"></div>
<div style="position:absolute;left:497.00px;top:895.00px;width:1324.00px;height:1.00px;background:#f0f0f0;"></div>
<div style="position:absolute;left:497.00px;top:959.00px;width:1324.00px;height:1.00px;background:#dcdcdc;"></div>
<div style="position:absolute;left:497.00px;top:960.00px;width:1324.00px;height:1.00px;background:#f0f0f0;"></div>
<div style="position:absolute;left:497.00px;top:1026.00px;width:1324.00px;height:1.00px;background:#dcdcdc;"></div>
<div style="position:absolute;left:497.00px;top:1027.00px;width:1324.00px;height:1.00px;background:#f0f0f0;"></div>
<div style="position:absolute;left:497.00px;top:1091.00px;width:1324.00px;height:1.00px;background:#dcdcdc;"></div>
<div style="position:absolute;left:497.00px;top:1092.00px;width:1324.00px;height:1.00px;background:#f0f0f0;"></div>
<div style="position:absolute;left:497.00px;top:1157.00px;width:1324.00px;height:1.00px;background:#dcdcdc;"></div>
<div style="position:absolute;left:497.00px;top:1158.00px;width:1324.00px;height:1.00px;background:#f0f0f0;"></div>
<div style="position:absolute;left:497.00px;top:1222.00px;width:1324.00px;height:1.00px;background:#dcdcdc;"></div>
<div style="position:absolute;left:497.00px;top:1223.00px;width:1324.00px;height:1.00px;background:#f0f0f0;"></div>
<div style="position:absolute;left:497.00px;top:1288.00px;width:1324.00px;height:1.00px;background:#dcdcdc;"></div>
<div style="position:absolute;left:497.00px;top:1289.00px;width:1324.00px;height:1.00px;background:#f0f0f0;"></div>
<div style="position:absolute;left:497.00px;top:1354.00px;width:1324.00px;height:1.00px;background:#dcdcdc;"></div>
<div style="position:absolute;left:497.00px;top:1355.00px;width:1324.00px;height:1.00px;background:#f0f0f0;"></div>
<div style="position:absolute;left:497.00px;top:1419.00px;width:1324.00px;height:1.00px;background:#dcdcdc;"></div>
<div style="position:absolute;left:497.00px;top:1420.00px;width:1324.00px;height:1.00px;background:#f0f0f0;"></div>
<div style="position:absolute;left:497.00px;top:1509.00px;width:1324.00px;height:1.00px;background:#dcdcdc;"></div>
<div style="position:absolute;left:497.00px;top:1510.00px;width:1324.00px;height:1.00px;background:#f0f0f0;"></div>
<div style="position:absolute;left:497.00px;top:1603.00px;width:1324.00px;height:1.00px;background:#dcdcdc;"></div>
<div style="position:absolute;left:497.00px;top:1604.00px;width:1324.00px;height:1.00px;background:#f0f0f0;"></div>
<div style="position:absolute;left:497.00px;top:1694.00px;width:1324.00px;height:1.00px;background:#dcdcdc;"></div>
<div style="position:absolute;left:497.00px;top:1695.00px;width:1324.00px;height:1.00px;background:#f0f0f0;"></div>
<div class="t" style="left:501.70px;top:572.21px;font-size:29.4px;color:#525257;font-weight:normal;">Montant encours autorisé</div>
<div class="t" style="left:501.70px;top:651.56px;font-size:29.4px;color:#525257;font-weight:normal;">Remises</div>
<div class="t" style="left:501.70px;top:731.01px;font-size:29.4px;color:#525257;font-weight:normal;">Date</div>
<svg style="position:absolute;left:965.00px;top:714.60px;" width="31.50" height="31.50" viewBox="0 0 100 100" preserveAspectRatio="none"><g transform="rotate(-45 50 50)"><path fill="#cccccc" d="M-10 50 L14 33 L78 33 L78 67 L14 67 Z"/><path fill="#cccccc" d="M84 33 L100 33 Q112 33 112 45 L112 55 Q112 67 100 67 L84 67 Z"/><path fill="#fff" d="M-2 50 L9 43 L9 57 Z" opacity="0.9"/><rect fill="#fff" x="20" y="40" width="54" height="4.5" opacity="0.9"/></g></svg>
<div class="t" style="left:501.70px;top:796.51px;font-size:29.4px;color:#525257;font-weight:normal;">Date prévue de livraison</div>
<svg style="position:absolute;left:965.00px;top:780.10px;" width="31.50" height="31.50" viewBox="0 0 100 100" preserveAspectRatio="none"><g transform="rotate(-45 50 50)"><path fill="#cccccc" d="M-10 50 L14 33 L78 33 L78 67 L14 67 Z"/><path fill="#cccccc" d="M84 33 L100 33 Q112 33 112 45 L112 55 Q112 67 100 67 L84 67 Z"/><path fill="#fff" d="M-2 50 L9 43 L9 57 Z" opacity="0.9"/><rect fill="#fff" x="20" y="40" width="54" height="4.5" opacity="0.9"/></g></svg>
<div class="t" style="left:501.70px;top:861.91px;font-size:29.4px;color:#525257;font-weight:normal;">Délai de livraison</div>
<svg style="position:absolute;left:965.00px;top:845.50px;" width="31.50" height="31.50" viewBox="0 0 100 100" preserveAspectRatio="none"><g transform="rotate(-45 50 50)"><path fill="#cccccc" d="M-10 50 L14 33 L78 33 L78 67 L14 67 Z"/><path fill="#cccccc" d="M84 33 L100 33 Q112 33 112 45 L112 55 Q112 67 100 67 L84 67 Z"/><path fill="#fff" d="M-2 50 L9 43 L9 57 Z" opacity="0.9"/><rect fill="#fff" x="20" y="40" width="54" height="4.5" opacity="0.9"/></g></svg>
<div class="t" style="left:501.70px;top:927.31px;font-size:29.4px;color:#525257;font-weight:normal;">Méthode d'expédition</div>
<svg style="position:absolute;left:965.00px;top:910.90px;" width="31.50" height="31.50" viewBox="0 0 100 100" preserveAspectRatio="none"><g transform="rotate(-45 50 50)"><path fill="#cccccc" d="M-10 50 L14 33 L78 33 L78 67 L14 67 Z"/><path fill="#cccccc" d="M84 33 L100 33 Q112 33 112 45 L112 55 Q112 67 100 67 L84 67 Z"/><path fill="#fff" d="M-2 50 L9 43 L9 57 Z" opacity="0.9"/><rect fill="#fff" x="20" y="40" width="54" height="4.5" opacity="0.9"/></g></svg>
<div class="t" style="left:501.70px;top:993.36px;font-size:29.4px;color:#525257;font-weight:normal;">Origine</div>
<svg style="position:absolute;left:965.00px;top:976.95px;" width="31.50" height="31.50" viewBox="0 0 100 100" preserveAspectRatio="none"><g transform="rotate(-45 50 50)"><path fill="#cccccc" d="M-10 50 L14 33 L78 33 L78 67 L14 67 Z"/><path fill="#cccccc" d="M84 33 L100 33 Q112 33 112 45 L112 55 Q112 67 100 67 L84 67 Z"/><path fill="#fff" d="M-2 50 L9 43 L9 57 Z" opacity="0.9"/><rect fill="#fff" x="20" y="40" width="54" height="4.5" opacity="0.9"/></g></svg>
<div class="t" style="left:501.70px;top:1059.41px;font-size:29.4px;color:#525257;font-weight:normal;">Conditions de règlement</div>
<svg style="position:absolute;left:965.00px;top:1043.00px;" width="31.50" height="31.50" viewBox="0 0 100 100" preserveAspectRatio="none"><g transform="rotate(-45 50 50)"><path fill="#cccccc" d="M-10 50 L14 33 L78 33 L78 67 L14 67 Z"/><path fill="#cccccc" d="M84 33 L100 33 Q112 33 112 45 L112 55 Q112 67 100 67 L84 67 Z"/><path fill="#fff" d="M-2 50 L9 43 L9 57 Z" opacity="0.9"/><rect fill="#fff" x="20" y="40" width="54" height="4.5" opacity="0.9"/></g></svg>
<div class="t" style="left:501.70px;top:1124.81px;font-size:29.4px;color:#525257;font-weight:normal;">Mode de règlement</div>
<svg style="position:absolute;left:965.00px;top:1108.40px;" width="31.50" height="31.50" viewBox="0 0 100 100" preserveAspectRatio="none"><g transform="rotate(-45 50 50)"><path fill="#cccccc" d="M-10 50 L14 33 L78 33 L78 67 L14 67 Z"/><path fill="#cccccc" d="M84 33 L100 33 Q112 33 112 45 L112 55 Q112 67 100 67 L84 67 Z"/><path fill="#fff" d="M-2 50 L9 43 L9 57 Z" opacity="0.9"/><rect fill="#fff" x="20" y="40" width="54" height="4.5" opacity="0.9"/></g></svg>
<div class="t" style="left:501.70px;top:1190.21px;font-size:29.4px;color:#525257;font-weight:normal;">Incoterms</div>
<svg style="position:absolute;left:965.00px;top:1173.80px;" width="31.50" height="31.50" viewBox="0 0 100 100" preserveAspectRatio="none"><g transform="rotate(-45 50 50)"><path fill="#cccccc" d="M-10 50 L14 33 L78 33 L78 67 L14 67 Z"/><path fill="#cccccc" d="M84 33 L100 33 Q112 33 112 45 L112 55 Q112 67 100 67 L84 67 Z"/><path fill="#fff" d="M-2 50 L9 43 L9 57 Z" opacity="0.9"/><rect fill="#fff" x="20" y="40" width="54" height="4.5" opacity="0.9"/></g></svg>
<div class="t" style="left:501.70px;top:1255.91px;font-size:29.4px;color:#525257;font-weight:normal;">Paiement en ligne</div>
<svg style="position:absolute;left:965.00px;top:1239.50px;" width="31.50" height="31.50" viewBox="0 0 100 100" preserveAspectRatio="none"><g transform="rotate(-45 50 50)"><path fill="#cccccc" d="M-10 50 L14 33 L78 33 L78 67 L14 67 Z"/><path fill="#cccccc" d="M84 33 L100 33 Q112 33 112 45 L112 55 Q112 67 100 67 L84 67 Z"/><path fill="#fff" d="M-2 50 L9 43 L9 57 Z" opacity="0.9"/><rect fill="#fff" x="20" y="40" width="54" height="4.5" opacity="0.9"/></g></svg>
<div class="t" style="left:501.70px;top:1321.61px;font-size:29.4px;color:#525257;font-weight:normal;">Paiement en ligne</div>
<svg style="position:absolute;left:965.00px;top:1305.20px;" width="31.50" height="31.50" viewBox="0 0 100 100" preserveAspectRatio="none"><g transform="rotate(-45 50 50)"><path fill="#cccccc" d="M-10 50 L14 33 L78 33 L78 67 L14 67 Z"/><path fill="#cccccc" d="M84 33 L100 33 Q112 33 112 45 L112 55 Q112 67 100 67 L84 67 Z"/><path fill="#fff" d="M-2 50 L9 43 L9 57 Z" opacity="0.9"/><rect fill="#fff" x="20" y="40" width="54" height="4.5" opacity="0.9"/></g></svg>
<div class="t" style="left:501.70px;top:1387.06px;font-size:29.4px;color:#525257;font-weight:normal;">Statut sur le site [Dolibarr Store]</div>
<svg style="position:absolute;left:965.00px;top:1370.65px;" width="31.50" height="31.50" viewBox="0 0 100 100" preserveAspectRatio="none"><g transform="rotate(-45 50 50)"><path fill="#cccccc" d="M-10 50 L14 33 L78 33 L78 67 L14 67 Z"/><path fill="#cccccc" d="M84 33 L100 33 Q112 33 112 45 L112 55 Q112 67 100 67 L84 67 Z"/><path fill="#fff" d="M-2 50 L9 43 L9 57 Z" opacity="0.9"/><rect fill="#fff" x="20" y="40" width="54" height="4.5" opacity="0.9"/></g></svg>
<div class="t" style="left:501.70px;top:1443.76px;font-size:29.4px;color:#525257;font-weight:normal;">Statut sur le site</div>
<div class="t" style="left:501.70px;top:1486.16px;font-size:29.4px;color:#525257;font-weight:normal;">[wordpress.dolibarrstore.com]</div>
<svg style="position:absolute;left:965.00px;top:1448.55px;" width="31.50" height="31.50" viewBox="0 0 100 100" preserveAspectRatio="none"><g transform="rotate(-45 50 50)"><path fill="#cccccc" d="M-10 50 L14 33 L78 33 L78 67 L14 67 Z"/><path fill="#cccccc" d="M84 33 L100 33 Q112 33 112 45 L112 55 Q112 67 100 67 L84 67 Z"/><path fill="#fff" d="M-2 50 L9 43 L9 57 Z" opacity="0.9"/><rect fill="#fff" x="20" y="40" width="54" height="4.5" opacity="0.9"/></g></svg>
<div class="t" style="left:501.70px;top:1535.66px;font-size:29.4px;color:#525257;font-weight:normal;">Lien vers la commande du site</div>
<div class="t" style="left:501.70px;top:1578.06px;font-size:29.4px;color:#525257;font-weight:normal;">[Dolibarr Store]</div>
<svg style="position:absolute;left:965.00px;top:1540.45px;" width="31.50" height="31.50" viewBox="0 0 100 100" preserveAspectRatio="none"><g transform="rotate(-45 50 50)"><path fill="#cccccc" d="M-10 50 L14 33 L78 33 L78 67 L14 67 Z"/><path fill="#cccccc" d="M84 33 L100 33 Q112 33 112 45 L112 55 Q112 67 100 67 L84 67 Z"/><path fill="#fff" d="M-2 50 L9 43 L9 57 Z" opacity="0.9"/><rect fill="#fff" x="20" y="40" width="54" height="4.5" opacity="0.9"/></g></svg>
<div class="t" style="left:501.70px;top:1628.21px;font-size:29.4px;color:#525257;font-weight:normal;">Lien vers la commande du site</div>
<div class="t" style="left:501.70px;top:1670.61px;font-size:29.4px;color:#525257;font-weight:normal;">[wordpress.dolibarrstore.com]</div>
<svg style="position:absolute;left:965.00px;top:1633.00px;" width="31.50" height="31.50" viewBox="0 0 100 100" preserveAspectRatio="none"><g transform="rotate(-45 50 50)"><path fill="#cccccc" d="M-10 50 L14 33 L78 33 L78 67 L14 67 Z"/><path fill="#cccccc" d="M84 33 L100 33 Q112 33 112 45 L112 55 Q112 67 100 67 L84 67 Z"/><path fill="#fff" d="M-2 50 L9 43 L9 57 Z" opacity="0.9"/><rect fill="#fff" x="20" y="40" width="54" height="4.5" opacity="0.9"/></g></svg>
<div class="t" style="left:1009.50px;top:572.01px;font-size:29.4px;color:#000;font-weight:normal;">504,62 / 6 500,00 CHF</div>
<div class="t" style="left:1009.50px;top:631.81px;font-size:29.4px;color:#999;font-weight:normal;">Ce client n'a pas de remise relative par défaut.</div>
<div class="t" style="left:1009.50px;top:672.41px;font-size:29.4px;color:#999;font-weight:normal;">Ce client n'a pas ou plus de crédit disponible.</div>
<div class="t" style="left:1009.50px;top:731.31px;font-size:29.4px;color:#000;font-weight:normal;">01/01/2025</div>
<div style="position:absolute;left:1015.70px;top:1240.70px;width:23.70px;height:23.70px;border:2px solid #c6c6c6;border-radius:5px;box-sizing:border-box;background:#f7f7f7;"></div>
<div style="position:absolute;left:1015.70px;top:1305.70px;width:23.70px;height:23.70px;border:2px solid #c6c6c6;border-radius:5px;box-sizing:border-box;background:#f7f7f7;"></div>
<div style="position:absolute;left:478.00px;top:531.20px;width:956.40px;height:80.90px;border:3px solid #e01e1e;box-sizing:border-box;"></div>
<div style="position:absolute;left:1876.60px;top:538.90px;width:1323.40px;height:2.00px;background:#e0e0e0;"></div>
<div style="position:absolute;left:1876.60px;top:604.70px;width:1323.40px;height:2.00px;background:#e0e0e0;"></div>
<div style="position:absolute;left:1876.60px;top:669.90px;width:1323.40px;height:2.00px;background:#e0e0e0;"></div>
<div class="t" style="left:1880.40px;top:572.21px;font-size:29.4px;color:#525257;font-weight:normal;">Montant HT</div>
<div class="t" style="right:78.30px;top:572.21px;font-size:29.4px;color:#000;font-weight:normal;">16 020,00 CHF</div>
<div class="t" style="left:1880.40px;top:638.01px;font-size:29.4px;color:#525257;font-weight:normal;">Montant TVA</div>
<div class="t" style="right:78.30px;top:638.01px;font-size:29.4px;color:#000;font-weight:normal;">1 206,10 CHF</div>
<div class="t" style="left:1880.40px;top:703.21px;font-size:29.4px;color:#525257;font-weight:normal;">Montant TTC</div>
<div class="t" style="right:78.30px;top:703.21px;font-size:29.4px;color:#000;font-weight:normal;">17 226,10 CHF</div>
<div style="position:absolute;left:1876.60px;top:735.50px;width:1323.40px;height:74.50px;background:#e9eaee;"></div>
<div style="position:absolute;left:2131.60px;top:735.50px;width:1.00px;height:74.50px;background:#e5e6ea;"></div>
<div style="position:absolute;left:2337.30px;top:735.50px;width:1.00px;height:74.50px;background:#e5e6ea;"></div>
<div style="position:absolute;left:2565.00px;top:735.50px;width:1.00px;height:74.50px;background:#e5e6ea;"></div>
<div style="position:absolute;left:2725.00px;top:735.50px;width:1.00px;height:74.50px;background:#e5e6ea;"></div>
<div style="position:absolute;left:2954.40px;top:735.50px;width:1.00px;height:74.50px;background:#e5e6ea;"></div>
<div style="position:absolute;left:1876.60px;top:809.00px;width:1323.40px;height:2.00px;background:#dcdcdc;"></div>
<div style="position:absolute;left:1876.60px;top:883.00px;width:1323.40px;height:74.00px;background:#f8f8f8;"></div>
<div style="position:absolute;left:1876.60px;top:882.00px;width:1323.40px;height:2.00px;background:#e0e0e0;"></div>
<div style="position:absolute;left:1876.60px;top:956.00px;width:1323.40px;height:2.00px;background:#e0e0e0;"></div>
<div style="position:absolute;left:1876.60px;top:1029.40px;width:1323.40px;height:2.00px;background:#e0e0e0;"></div>
<div class="t" style="left:1892.40px;top:774.31px;font-size:29.4px;color:#55555f;font-weight:normal;">Marges</div>
<div class="t" style="right:950.50px;top:774.31px;font-size:29.4px;color:#55555f;font-weight:normal;">Prix de vente</div>
<div class="t" style="right:727.70px;top:774.31px;font-size:29.4px;color:#55555f;font-weight:normal;">Prix de revient</div>
<div class="t" style="right:564.40px;top:774.31px;font-size:29.4px;color:#55555f;font-weight:normal;">Marge</div>
<div class="t" style="right:335.30px;top:774.31px;font-size:29.4px;color:#55555f;font-weight:normal;">Taux de marge</div>
<div class="t" style="right:89.70px;top:774.31px;font-size:29.4px;color:#55555f;font-weight:normal;">Taux de marque</div>
<div class="t" style="left:1892.40px;top:847.81px;font-size:29.4px;color:#222;font-weight:normal;">Marge / Produits</div>
<div class="t" style="right:950.50px;top:847.81px;font-size:29.4px;color:#222;font-weight:normal;">16 020,00</div>
<div class="t" style="right:727.70px;top:847.81px;font-size:29.4px;color:#222;font-weight:normal;">3 520,00</div>
<div class="t" style="right:564.40px;top:847.81px;font-size:29.4px;color:#222;font-weight:normal;">12 500,00</div>
<div class="t" style="right:335.30px;top:847.81px;font-size:29.4px;color:#222;font-weight:normal;">355,11%</div>
<div class="t" style="right:89.70px;top:847.81px;font-size:29.4px;color:#222;font-weight:normal;">78,03%</div>
<div class="t" style="left:1892.40px;top:921.11px;font-size:29.4px;color:#222;font-weight:normal;">Marge / Services</div>
<div class="t" style="right:950.50px;top:921.11px;font-size:29.4px;color:#222;font-weight:normal;">0,00</div>
<div class="t" style="right:727.70px;top:921.11px;font-size:29.4px;color:#222;font-weight:normal;">0,00</div>
<div class="t" style="right:564.40px;top:921.11px;font-size:29.4px;color:#222;font-weight:normal;">0,00</div>
<div class="t" style="left:1892.40px;top:994.81px;font-size:29.4px;color:#888;font-weight:normal;">Marge totale</div>
<div class="t" style="right:950.50px;top:994.81px;font-size:29.4px;color:#888;font-weight:normal;">16 020,00</div>
<div class="t" style="right:727.70px;top:994.81px;font-size:29.4px;color:#888;font-weight:normal;">3 520,00</div>
<div class="t" style="right:564.40px;top:994.81px;font-size:29.4px;color:#888;font-weight:normal;">12 500,00</div>
<div class="t" style="right:335.30px;top:994.81px;font-size:29.4px;color:#888;font-weight:normal;">355,11%</div>
<div class="t" style="right:89.70px;top:994.81px;font-size:29.4px;color:#888;font-weight:normal;">78,03%</div>
<div style="position:absolute;left:497.70px;top:1758.00px;width:2702.30px;height:151.40px;background:#e9eaee;"></div>
<div style="position:absolute;left:497.70px;top:1758.00px;width:2702.30px;height:2.00px;background:#d8d8d8;"></div>
<div style="position:absolute;left:1649.00px;top:1760.00px;width:1.00px;height:149.40px;background:#e5e6ea;"></div>
<div style="position:absolute;left:1832.00px;top:1760.00px;width:1.00px;height:149.40px;background:#e5e6ea;"></div>
<div style="position:absolute;left:2152.50px;top:1760.00px;width:1.00px;height:149.40px;background:#e5e6ea;"></div>
<div style="position:absolute;left:2253.00px;top:1760.00px;width:1.00px;height:149.40px;background:#e5e6ea;"></div>
<div style="position:absolute;left:2417.70px;top:1760.00px;width:1.00px;height:149.40px;background:#e5e6ea;"></div>
<div style="position:absolute;left:2617.70px;top:1760.00px;width:1.00px;height:149.40px;background:#e5e6ea;"></div>
<div style="position:absolute;left:2734.80px;top:1760.00px;width:1.00px;height:149.40px;background:#e5e6ea;"></div>
<div style="position:absolute;left:2881.60px;top:1760.00px;width:1.00px;height:149.40px;background:#e5e6ea;"></div>
<div style="position:absolute;left:3028.50px;top:1760.00px;width:1.00px;height:149.40px;background:#e5e6ea;"></div>
<div style="position:absolute;left:3090.50px;top:1760.00px;width:1.00px;height:149.40px;background:#e5e6ea;"></div>
<div style="position:absolute;left:497.70px;top:1909.40px;width:2702.30px;height:72.00px;background:#f8f8f8;"></div>
<div style="position:absolute;left:497.70px;top:2051.50px;width:2702.30px;height:70.80px;background:#f8f8f8;"></div>
<div style="position:absolute;left:497.70px;top:1908.40px;width:2702.30px;height:2.00px;background:#e0e0e0;"></div>
<div style="position:absolute;left:497.70px;top:1980.40px;width:2702.30px;height:2.00px;background:#e0e0e0;"></div>
<div style="position:absolute;left:497.70px;top:2050.50px;width:2702.30px;height:2.00px;background:#e0e0e0;"></div>
<div style="position:absolute;left:497.70px;top:2121.30px;width:2702.30px;height:2.00px;background:#e0e0e0;"></div>
<div class="t" style="left:513.50px;top:1834.81px;font-size:29.4px;color:#30304a;font-weight:normal;">Description</div>
<div class="t" style="right:1676.60px;top:1834.81px;font-size:29.4px;color:#30304a;font-weight:normal;">TVA</div>
<svg style="position:absolute;left:1599.00px;top:1819.00px;" width="31.00" height="30.00" viewBox="0 0 100 100" preserveAspectRatio="none"><g transform="rotate(-45 50 50)"><path fill="#bbbbbb" d="M-10 50 L14 33 L78 33 L78 67 L14 67 Z"/><path fill="#bbbbbb" d="M84 33 L100 33 Q112 33 112 45 L112 55 Q112 67 100 67 L84 67 Z"/><path fill="#e9eaee" d="M-2 50 L9 43 L9 57 Z" opacity="0.9"/><rect fill="#e9eaee" x="20" y="40" width="54" height="4.5" opacity="0.9"/></g></svg>
<div class="t" style="right:1452.30px;top:1834.81px;font-size:29.4px;color:#30304a;font-weight:normal;">P.U. HT</div>
<div class="t" style="right:1265.00px;top:1834.81px;font-size:29.4px;color:#30304a;font-weight:normal;">P.U TTC</div>
<div class="t" style="right:1134.00px;top:1834.81px;font-size:29.4px;color:#30304a;font-weight:normal;">Qté</div>
<div class="t" style="left:2170.90px;top:1834.81px;font-size:29.4px;color:#30304a;font-weight:normal;">Unité</div>
<div class="t" style="left:2272.00px;top:1834.81px;font-size:29.4px;color:#30304a;font-weight:normal;">Réduc.</div>
<svg style="position:absolute;left:2371.00px;top:1819.00px;" width="31.00" height="30.00" viewBox="0 0 100 100" preserveAspectRatio="none"><g transform="rotate(-45 50 50)"><path fill="#bbbbbb" d="M-10 50 L14 33 L78 33 L78 67 L14 67 Z"/><path fill="#bbbbbb" d="M84 33 L100 33 Q112 33 112 45 L112 55 Q112 67 100 67 L84 67 Z"/><path fill="#e9eaee" d="M-2 50 L9 43 L9 57 Z" opacity="0.9"/><rect fill="#e9eaee" x="20" y="40" width="54" height="4.5" opacity="0.9"/></g></svg>
<div class="t" style="right:670.70px;top:1815.21px;font-size:29.4px;color:#30304a;font-weight:normal;">Prix de</div>
<div class="t" style="right:670.70px;top:1856.41px;font-size:29.4px;color:#30304a;font-weight:normal;">revient</div>
<div class="t" style="right:555.00px;top:1793.11px;font-size:29.4px;color:#30304a;font-weight:normal;">Taux</div>
<div class="t" style="right:555.00px;top:1834.21px;font-size:29.4px;color:#30304a;font-weight:normal;">de</div>
<div class="t" style="right:555.00px;top:1876.61px;font-size:29.4px;color:#30304a;font-weight:normal;">marge</div>
<div class="t" style="right:406.20px;top:1815.21px;font-size:29.4px;color:#30304a;font-weight:normal;">Taux de</div>
<div class="t" style="right:406.20px;top:1856.41px;font-size:29.4px;color:#30304a;font-weight:normal;">marque</div>
<div class="t" style="left:2903.80px;top:1834.81px;font-size:29.4px;color:#30304a;font-weight:normal;">Total HT</div>
<svg style="position:absolute;left:512.90px;top:1930.00px;" width="29.00" height="28.40" viewBox="0 0 100 100" preserveAspectRatio="none"><path fill="#a8954a" d="M50 0 L96 20 L96 76 L50 100 L4 76 L4 20 Z"/><path fill="#f8f8f8" d="M50 20 L78 30 L50 42 L22 30 Z"/><path fill="#f8f8f8" d="M60 56 L82 46 L82 68 L60 80 Z"/></svg>
<div class="t" style="left:551.4px;top:1945.31px;font-size:29.4px;color:#222"><span style="color:rgb(10,20,100)">PR2021-0023</span> - Imprimante</div>
<div class="t" style="right:1640.60px;top:1945.31px;font-size:29.4px;color:#222;font-weight:normal;">18%</div>
<div class="t" style="right:1452.30px;top:1945.31px;font-size:29.4px;color:#222;font-weight:normal;">440,00</div>
<div class="t" style="right:1265.00px;top:1945.31px;font-size:29.4px;color:#222;font-weight:normal;">519,20</div>
<div class="t" style="right:1134.00px;top:1945.31px;font-size:29.4px;color:#222;font-weight:normal;">8</div>
<div class="t" style="right:670.70px;top:1945.31px;font-size:29.4px;color:#222;font-weight:normal;">440,00</div>
<div class="t" style="right:555.00px;top:1945.31px;font-size:29.4px;color:#222;font-weight:normal;">0,00%</div>
<div class="t" style="right:406.20px;top:1945.31px;font-size:29.4px;color:#222;font-weight:normal;">0,00%</div>
<div class="t" style="right:260.60px;top:1945.31px;font-size:29.4px;color:#222;font-weight:normal;">3 520,00</div>
<div class="t" style="left:2170.90px;top:1945.31px;font-size:29.4px;color:#222;font-weight:normal;">T</div>
<svg style="position:absolute;left:3044.40px;top:1929.00px;" width="29.50" height="29.50" viewBox="0 0 100 100" preserveAspectRatio="none"><g transform="rotate(-45 50 50)"><path fill="#cccccc" d="M-10 50 L14 33 L78 33 L78 67 L14 67 Z"/><path fill="#cccccc" d="M84 33 L100 33 Q112 33 112 45 L112 55 Q112 67 100 67 L84 67 Z"/><path fill="#f8f8f8" d="M-2 50 L9 43 L9 57 Z" opacity="0.9"/><rect fill="#f8f8f8" x="20" y="40" width="54" height="4.5" opacity="0.9"/></g></svg>
<svg style="position:absolute;left:3106.00px;top:1929.80px;" width="25.00" height="28.70" viewBox="0 0 100 100" preserveAspectRatio="none"><path fill="#666" d="M0 8 Q0 4 4 4 L34 4 Q38 0 50 0 Q62 0 66 4 L96 4 Q100 4 100 8 L100 17 L0 17 Z"/><path fill="#666" d="M7 25 L93 25 L88 92 Q87 100 78 100 L22 100 Q13 100 12 92 Z"/></svg>
<svg style="position:absolute;left:3166.20px;top:1937.30px;" width="16.50" height="16.70" viewBox="0 0 100 100" preserveAspectRatio="none"><rect fill="#8c8c8c" x="0" y="0" width="24" height="24"/><rect fill="#8c8c8c" x="38" y="0" width="24" height="24"/><rect fill="#8c8c8c" x="76" y="0" width="24" height="24"/><rect fill="#8c8c8c" x="0" y="38" width="24" height="24"/><rect fill="#8c8c8c" x="38" y="38" width="24" height="24"/><rect fill="#8c8c8c" x="76" y="38" width="24" height="24"/><rect fill="#8c8c8c" x="0" y="76" width="24" height="24"/><rect fill="#8c8c8c" x="38" y="76" width="24" height="24"/><rect fill="#8c8c8c" x="76" y="76" width="24" height="24"/></svg>
<svg style="position:absolute;left:512.90px;top:2001.00px;" width="29.00" height="28.40" viewBox="0 0 100 100" preserveAspectRatio="none"><path fill="#a8954a" d="M50 0 L96 20 L96 76 L50 100 L4 76 L4 20 Z"/><path fill="#fff" d="M50 20 L78 30 L50 42 L22 30 Z"/><path fill="#fff" d="M60 56 L82 46 L82 68 L60 80 Z"/></svg>
<div class="t" style="left:551.4px;top:2016.31px;font-size:29.4px;color:#222"><span style="color:rgb(10,20,100)">Ref-0017</span> - Caméras IP</div>
<div class="t" style="right:1640.60px;top:2016.31px;font-size:29.4px;color:#222;font-weight:normal;">7,7%</div>
<div class="t" style="right:1452.30px;top:2016.31px;font-size:29.4px;color:#222;font-weight:normal;">500,00</div>
<div class="t" style="right:1265.00px;top:2016.31px;font-size:29.4px;color:#222;font-weight:normal;">538,50</div>
<div class="t" style="right:1134.00px;top:2016.31px;font-size:29.4px;color:#222;font-weight:normal;">10</div>
<div class="t" style="right:670.70px;top:2016.31px;font-size:29.4px;color:#222;font-weight:normal;">0,00</div>
<div class="t" style="right:555.00px;top:2016.31px;font-size:29.4px;color:#222;font-weight:normal;">n/a</div>
<div class="t" style="right:406.20px;top:2016.31px;font-size:29.4px;color:#222;font-weight:normal;">100,00%</div>
<div class="t" style="right:260.60px;top:2016.31px;font-size:29.4px;color:#222;font-weight:normal;">5 000,00</div>
<div class="t" style="left:2170.90px;top:2016.31px;font-size:29.4px;color:#222;font-weight:normal;">T</div>
<svg style="position:absolute;left:3044.40px;top:2000.00px;" width="29.50" height="29.50" viewBox="0 0 100 100" preserveAspectRatio="none"><g transform="rotate(-45 50 50)"><path fill="#cccccc" d="M-10 50 L14 33 L78 33 L78 67 L14 67 Z"/><path fill="#cccccc" d="M84 33 L100 33 Q112 33 112 45 L112 55 Q112 67 100 67 L84 67 Z"/><path fill="#fff" d="M-2 50 L9 43 L9 57 Z" opacity="0.9"/><rect fill="#fff" x="20" y="40" width="54" height="4.5" opacity="0.9"/></g></svg>
<svg style="position:absolute;left:3106.00px;top:2000.80px;" width="25.00" height="28.70" viewBox="0 0 100 100" preserveAspectRatio="none"><path fill="#666" d="M0 8 Q0 4 4 4 L34 4 Q38 0 50 0 Q62 0 66 4 L96 4 Q100 4 100 8 L100 17 L0 17 Z"/><path fill="#666" d="M7 25 L93 25 L88 92 Q87 100 78 100 L22 100 Q13 100 12 92 Z"/></svg>
<svg style="position:absolute;left:3166.20px;top:2008.30px;" width="16.50" height="16.70" viewBox="0 0 100 100" preserveAspectRatio="none"><rect fill="#8c8c8c" x="0" y="0" width="24" height="24"/><rect fill="#8c8c8c" x="38" y="0" width="24" height="24"/><rect fill="#8c8c8c" x="76" y="0" width="24" height="24"/><rect fill="#8c8c8c" x="0" y="38" width="24" height="24"/><rect fill="#8c8c8c" x="38" y="38" width="24" height="24"/><rect fill="#8c8c8c" x="76" y="38" width="24" height="24"/><rect fill="#8c8c8c" x="0" y="76" width="24" height="24"/><rect fill="#8c8c8c" x="38" y="76" width="24" height="24"/><rect fill="#8c8c8c" x="76" y="76" width="24" height="24"/></svg>
<svg style="position:absolute;left:512.90px;top:2071.50px;" width="29.00" height="28.40" viewBox="0 0 100 100" preserveAspectRatio="none"><path fill="#a8954a" d="M50 0 L96 20 L96 76 L50 100 L4 76 L4 20 Z"/><path fill="#f8f8f8" d="M50 20 L78 30 L50 42 L22 30 Z"/><path fill="#f8f8f8" d="M60 56 L82 46 L82 68 L60 80 Z"/></svg>
<div class="t" style="left:551.4px;top:2086.81px;font-size:29.4px;color:#222"><span style="color:rgb(10,20,100)">Prod_002</span> - Ecran 1200 pc</div>
<div class="t" style="right:1640.60px;top:2086.81px;font-size:29.4px;color:#222;font-weight:normal;">2,5%</div>
<div class="t" style="right:1452.30px;top:2086.81px;font-size:29.4px;color:#222;font-weight:normal;">300,00</div>
<div class="t" style="right:1265.00px;top:2086.81px;font-size:29.4px;color:#222;font-weight:normal;">307,50</div>
<div class="t" style="right:1134.00px;top:2086.81px;font-size:29.4px;color:#222;font-weight:normal;">25</div>
<div class="t" style="right:670.70px;top:2086.81px;font-size:29.4px;color:#222;font-weight:normal;">0,00</div>
<div class="t" style="right:555.00px;top:2086.81px;font-size:29.4px;color:#222;font-weight:normal;">n/a</div>
<div class="t" style="right:406.20px;top:2086.81px;font-size:29.4px;color:#222;font-weight:normal;">100,00%</div>
<div class="t" style="right:260.60px;top:2086.81px;font-size:29.4px;color:#222;font-weight:normal;">7 500,00</div>
<div class="t" style="left:2170.90px;top:2086.81px;font-size:29.4px;color:#222;font-weight:normal;">T</div>
<svg style="position:absolute;left:3044.40px;top:2070.50px;" width="29.50" height="29.50" viewBox="0 0 100 100" preserveAspectRatio="none"><g transform="rotate(-45 50 50)"><path fill="#cccccc" d="M-10 50 L14 33 L78 33 L78 67 L14 67 Z"/><path fill="#cccccc" d="M84 33 L100 33 Q112 33 112 45 L112 55 Q112 67 100 67 L84 67 Z"/><path fill="#f8f8f8" d="M-2 50 L9 43 L9 57 Z" opacity="0.9"/><rect fill="#f8f8f8" x="20" y="40" width="54" height="4.5" opacity="0.9"/></g></svg>
<svg style="position:absolute;left:3106.00px;top:2071.30px;" width="25.00" height="28.70" viewBox="0 0 100 100" preserveAspectRatio="none"><path fill="#666" d="M0 8 Q0 4 4 4 L34 4 Q38 0 50 0 Q62 0 66 4 L96 4 Q100 4 100 8 L100 17 L0 17 Z"/><path fill="#666" d="M7 25 L93 25 L88 92 Q87 100 78 100 L22 100 Q13 100 12 92 Z"/></svg>
<svg style="position:absolute;left:3166.20px;top:2078.80px;" width="16.50" height="16.70" viewBox="0 0 100 100" preserveAspectRatio="none"><rect fill="#8c8c8c" x="0" y="0" width="24" height="24"/><rect fill="#8c8c8c" x="38" y="0" width="24" height="24"/><rect fill="#8c8c8c" x="76" y="0" width="24" height="24"/><rect fill="#8c8c8c" x="0" y="38" width="24" height="24"/><rect fill="#8c8c8c" x="38" y="38" width="24" height="24"/><rect fill="#8c8c8c" x="76" y="38" width="24" height="24"/><rect fill="#8c8c8c" x="0" y="76" width="24" height="24"/><rect fill="#8c8c8c" x="38" y="76" width="24" height="24"/><rect fill="#8c8c8c" x="76" y="76" width="24" height="24"/></svg>
<div style="position:absolute;left:497.70px;top:2123.30px;width:2702.30px;height:282.70px;background:#f8f8f8;"></div>
<div style="position:absolute;left:519.20px;top:2152.90px;width:25.30px;height:25.30px;border:2px solid #777;border-radius:50%;box-sizing:border-box;background:#fff;"></div>
<div class="t" style="left:560.30px;top:2163.01px;font-size:29.4px;color:#222;font-weight:normal;">Ligne libre de type</div>
<div style="position:absolute;left:807.30px;top:2137.70px;width:159.30px;height:53.70px;background:#fff;border-radius:6px;box-shadow:0 2px 2px rgba(0,0,0,0.08);"></div>
<svg style="position:absolute;left:937.00px;top:2161.00px;" width="15.00" height="9.00" viewBox="0 0 10 6" preserveAspectRatio="none"><path fill="#888" d="M0 0 L10 0 L5 6 Z"/></svg>
<div style="position:absolute;left:519.20px;top:2205.30px;width:25.30px;height:25.30px;border:2.5px solid #1a73e8;border-radius:50%;box-sizing:border-box;background:#fff;"></div>
<div style="position:absolute;left:525.20px;top:2211.30px;width:13.30px;height:13.30px;background:#1a73e8;border-radius:50%;"></div>
<div class="t" style="left:560.30px;top:2217.21px;font-size:29.4px;color:#222;font-weight:normal;">Produits/Services prédéfinis en vente</div>
<div style="position:absolute;left:513.50px;top:2245.10px;width:994.70px;height:53.70px;background:#fff;border-radius:6px;box-shadow:0 2px 2px rgba(0,0,0,0.08);"></div>
<div class="t" style="left:526.10px;top:2272.81px;font-size:29.4px;color:#000;font-weight:normal;">P000002 (14526) - Nuevo Producto - 50 CHF TTC - Stock: 0,00</div>
<svg style="position:absolute;left:1477.00px;top:2268.00px;" width="16.00" height="9.00" viewBox="0 0 10 6" preserveAspectRatio="none"><path fill="#888" d="M0 0 L10 0 L5 6 Z"/></svg>
<div style="position:absolute;left:513.50px;top:2312.70px;width:993.50px;height:103.30px;background:#fff;border:1.5px solid #ddd;border-radius:6px;box-sizing:border-box;"></div>
<div style="position:absolute;left:1664.90px;top:2259.20px;width:154.90px;height:53.80px;background:#fff;border-radius:6px;box-shadow:0 2px 2px rgba(0,0,0,0.08);"></div>
<div style="position:absolute;left:1852.00px;top:2259.20px;width:155.00px;height:53.80px;background:#fff;border-radius:6px;box-shadow:0 2px 2px rgba(0,0,0,0.08);"></div>
<div style="position:absolute;left:2039.90px;top:2259.20px;width:99.30px;height:53.80px;background:#fff;border-radius:6px;box-shadow:0 2px 2px rgba(0,0,0,0.08);"></div>
<div style="position:absolute;left:2278.50px;top:2259.20px;width:96.80px;height:53.80px;background:#fff;border-radius:6px;box-shadow:0 2px 2px rgba(0,0,0,0.08);"></div>
<div style="position:absolute;left:2433.50px;top:2259.20px;width:167.80px;height:53.80px;background:#fff;border-radius:6px;box-shadow:0 2px 2px rgba(0,0,0,0.08);"></div>
<div class="t" style="right:1142.00px;top:2287.31px;font-size:29.4px;color:#000;font-weight:normal;">1</div>
<div class="t" style="left:2377.00px;top:2288.31px;font-size:29.4px;color:#999;font-weight:normal;">%</div>
<div class="t" style="right:679.00px;top:2287.31px;font-size:29.4px;color:#000;font-weight:normal;">0</div>
<div style="position:absolute;left:2940.50px;top:2252.90px;width:200.60px;height:69.60px;background:#9e7aad;border-radius:6px;"></div>
<div class="t" style="left:2540.80px;width:1000px;text-align:center;top:2288.87px;font-size:29.5px;color:#fff;font-weight:bold;">AJOUTER</div>
<div style="position:absolute;left:1205px;top:8px;width:2040px;height:164.5px;border-radius:15px;background:rgba(216,158,170,0.95);box-shadow:2px 4px 6px rgba(0,0,0,0.3);"></div>
<div style="position:absolute;left:1205px;top:8px;width:2040px;height:164.5px;border-radius:15px;background:rgba(255,255,255,0.0)"></div>
<div class="t" style="left:1246px;top:70.07px;font-size:35px;color:rgb(167,41,71);transform-origin:0 0;transform:scaleX(1.1545);" id="b1">La limite d'encours de 6 500,00 est dépassée, montant total est 17 276,10 et il reste encore des 504,62 TTC</div>
<div class="t" style="left:1246px;top:112.47px;font-size:35px;color:rgb(167,41,71);transform-origin:0 0;transform:scaleX(1.1545);">à payer.</div>
<svg style="position:absolute;left:3202.00px;top:23.00px;" width="19.00" height="17.50" viewBox="0 0 20 20" preserveAspectRatio="none"><path stroke="rgb(167,41,71)" stroke-width="4.5" d="M2 2 L18 18 M18 2 L2 18"/></svg>
</body></html>
